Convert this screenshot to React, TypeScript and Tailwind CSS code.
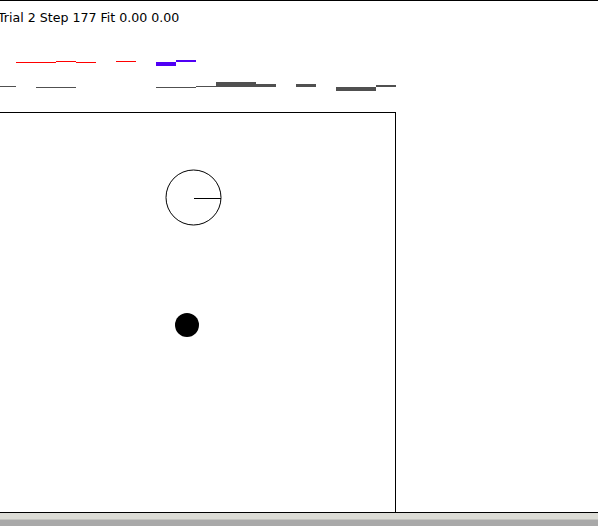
const red = [
  { x: 16, y: 62, w: 40, h: 1 },
  { x: 56, y: 61, w: 20, h: 1 },
  { x: 76, y: 62, w: 20, h: 1 },
  { x: 116, y: 61, w: 20, h: 1 },
];

const blue = [
  { x: 156, y: 62, w: 20, h: 4 },
  { x: 176, y: 60, w: 20, h: 2 },
];

const gray = [
  { x: 0, y: 86, w: 16, h: 1 },
  { x: 36, y: 87, w: 40, h: 1 },
  { x: 156, y: 87, w: 40, h: 1 },
  { x: 196, y: 86, w: 20, h: 1 },
  { x: 216, y: 82, w: 40, h: 5 },
  { x: 256, y: 84, w: 20, h: 3 },
  { x: 296, y: 84, w: 20, h: 3 },
  { x: 336, y: 87, w: 40, h: 4 },
  { x: 376, y: 85, w: 20, h: 2 },
];

// chart strip sits in the header, y offset 1 because of the top border
const Traces = () => (
  <svg width={400} height={60} viewBox="0 40 400 60" className="block">
    {red.map((r, i) => (
      <rect key={'r' + i} x={r.x} y={r.y} width={r.w} height={r.h} fill="#ff0000" />
    ))}
    {blue.map((r, i) => (
      <rect key={'b' + i} x={r.x} y={r.y} width={r.w} height={r.h} fill="#5000f5" />
    ))}
    {gray.map((r, i) => (
      <rect key={'g' + i} x={r.x} y={r.y} width={r.w} height={r.h} fill="#505050" />
    ))}
  </svg>
);

const Arena = () => (
  <svg width={395} height={399} className="block">
    <circle cx={193.5} cy={84.5} r={27.5} fill="none" stroke="#000" strokeWidth={1} />
    <line x1={194} y1={85.5} x2={221} y2={85.5} stroke="#000" strokeWidth={1} />
    <circle cx={187} cy={212} r={12} fill="#000" />
  </svg>
);

export default function App() {
  return (
    <div className="w-[598px] h-[526px] flex flex-col bg-white overflow-hidden">
      <div className="flex flex-col border-t border-b border-black h-[513px]">
        <div className="h-[111px] flex flex-col">
          <p
            className="pt-[10px] ml-[-2px] text-[12.6px] leading-[14px] text-black whitespace-nowrap"
            style={{ fontFamily: '"DejaVu Sans", sans-serif' }}
          >
            Trial 2 Step 177 Fit 0.00 0.00
          </p>
          <div className="mt-[15px]">
            <Traces />
          </div>
        </div>
        <div className="flex h-[400px]">
          <div className="w-[396px] h-[400px] border-t border-r border-black">
            <Arena />
          </div>
          <div className="flex-1" />
        </div>
      </div>
      <div className="h-[6px] bg-[#dcdcd6]" />
      <div className="h-px bg-[#c4c4c0]" />
      <div className="flex-1 bg-[#a9a9a9]" />
    </div>
  );
}
